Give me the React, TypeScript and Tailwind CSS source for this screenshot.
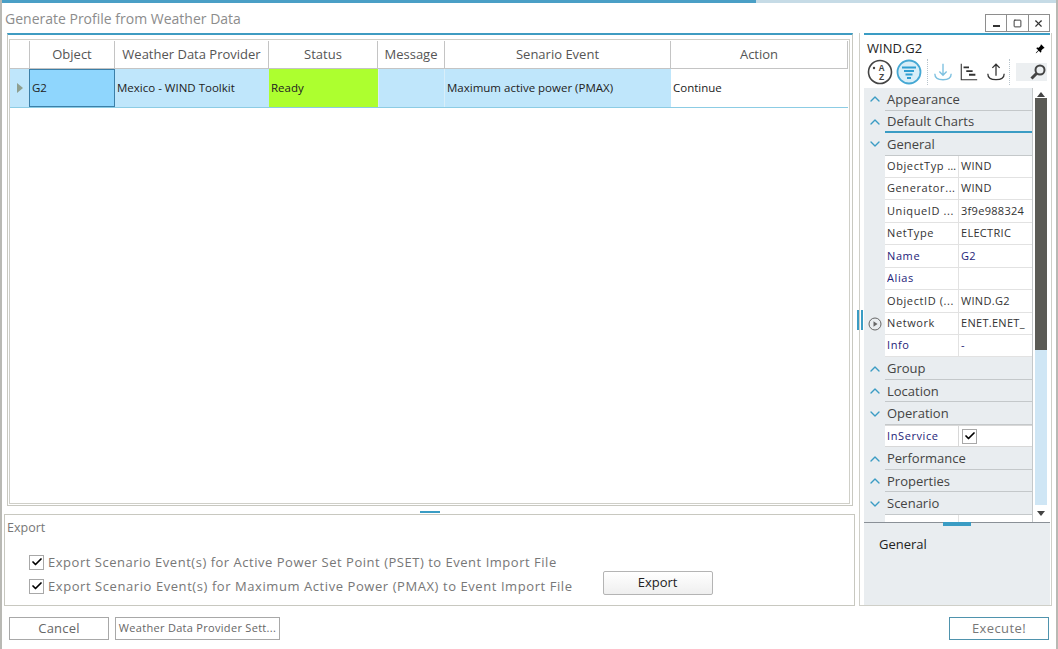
import { Check, ChevronDown, ChevronUp, Square, X } from "lucide-react";
import { BsPinAngleFill } from "react-icons/bs";
import React from "react";

const columns = [
  { label: "Object", width: "w-[85px]" },
  { label: "Weather Data Provider", width: "w-[154px]" },
  { label: "Status", width: "w-[109px]" },
  { label: "Message", width: "w-[67px]" },
  { label: "Senario Event", width: "w-[226px]" },
  { label: "Action", width: "w-[177px]" },
];

function Checkbox() {
  return (
    <span className="flex h-[15px] w-[15px] shrink-0 items-center justify-center border border-[#a8a8a8] bg-white">
      <Check className="h-3 w-3 text-black" strokeWidth={3.5} />
    </span>
  );
}

function Category({ label, open, line }: { label: string; open?: boolean; line?: boolean }) {
  return (
    <div className="flex h-[22.5px] shrink-0">
      <div className="flex w-[21px] items-center justify-center text-[#3a9cc4]">
        {open ? <ChevronDown className="h-4 w-4" strokeWidth={2} /> : <ChevronUp className="h-4 w-4" strokeWidth={2} />}
      </div>
      <div
        className={
          line
            ? "flex flex-1 items-center border-b-2 border-[#3a9cc4] pl-[2px] pt-[2px] text-[13px] text-[#444]"
            : "flex flex-1 items-center border-b border-[#c4c8ca] pl-[2px] pt-[2px] text-[13px] text-[#444]"
        }
      >
        {label}
      </div>
    </div>
  );
}

function Prop({ name, value, blue, play }: { name: string; value?: string; blue?: boolean; play?: boolean }) {
  return (
    <div className="flex h-[22.45px] shrink-0">
      <div className="flex w-[21px] items-center justify-center">
        {play && (
          <svg width="14" height="14" viewBox="0 0 14 14" fill="none">
            <circle cx="7" cy="7" r="6" stroke="#666" strokeWidth="1" />
            <path d="M5.5 4.2 9.5 7l-4 2.8z" fill="#666" />
          </svg>
        )}
      </div>
      <div
        className={
          blue
            ? "flex w-[74px] items-center border-b border-r border-[#e2e2e2] bg-white pl-[2px] text-[11px] tracking-[0.6px] text-[#1d1d78]"
            : "flex w-[74px] items-center border-b border-r border-[#e2e2e2] bg-white pl-[2px] text-[11px] tracking-[0.6px] text-[#333]"
        }
      >
        <span className="truncate">{name}</span>
      </div>
      <div
        className={
          blue
            ? "flex flex-1 items-center overflow-hidden whitespace-nowrap border-b border-[#e2e2e2] bg-white pl-[2px] text-[11px] tracking-[0.3px] text-[#1d1d78]"
            : "flex flex-1 items-center overflow-hidden whitespace-nowrap border-b border-[#e2e2e2] bg-white pl-[2px] text-[11px] tracking-[0.3px] text-[#333]"
        }
      >
        {value}
      </div>
    </div>
  );
}

function ToolIcons() {
  return (
    <div className="flex h-[33px] items-center pl-[3px]">
      <svg width="26" height="26" viewBox="0 0 26 26" fill="none">
        <circle cx="13" cy="13" r="11.5" stroke="#444" strokeWidth="1.6" />
        <text x="14.5" y="11.5" fontSize="8.5" fontWeight="700" textAnchor="middle" fill="#444" fontFamily="Liberation Sans, sans-serif">A</text>
        <text x="14.5" y="21" fontSize="8.5" fontWeight="700" textAnchor="middle" fill="#444" fontFamily="Liberation Sans, sans-serif">Z</text>
        <circle cx="7" cy="9" r="1.2" fill="#444" />
      </svg>
      <svg className="ml-[3px]" width="26" height="26" viewBox="0 0 26 26" fill="none">
        <circle cx="13" cy="13" r="11.5" fill="#d8eef8" stroke="#45a8d4" strokeWidth="1.8" />
        <path d="M6 8.5h14M8 12h10M9.5 15.5h7M11 19h4" stroke="#2f9ed0" strokeWidth="1.8" />
      </svg>
      <span className="ml-[5px] h-[26px] border-l border-dotted border-[#b8c4cc]" />
      <svg className="ml-[5px]" width="20" height="20" viewBox="0 0 22 22" fill="none">
        <path d="M11 2v12M7 10.5l4 4 4-4" stroke="#7cc0e0" strokeWidth="1.5" />
        <path d="M2 13c0 5 4 6.5 9 6.5S20 18 20 13" stroke="#7cc0e0" strokeWidth="1.5" />
      </svg>
      <svg className="ml-[6px]" width="20" height="20" viewBox="0 0 22 22" fill="none">
        <path d="M2.5 2v17.5H20" stroke="#333" strokeWidth="1.2" />
        <path d="M5 6h6M8 10h7M11 14h7" stroke="#333" strokeWidth="2" />
      </svg>
      <svg className="ml-[7px]" width="20" height="20" viewBox="0 0 22 22" fill="none">
        <path d="M11 15V3M7 6.5l4-4 4 4" stroke="#333" strokeWidth="1.4" />
        <path d="M2 13c0 5 4 6.5 9 6.5S20 18 20 13" stroke="#333" strokeWidth="1.4" />
      </svg>
      <span className="ml-[3px] h-[26px] border-l border-dotted border-[#b8c4cc]" />
      <div className="ml-[6px] flex h-[18px] w-[31px] items-center justify-end bg-[#eceff1]">
        <svg width="18" height="18" viewBox="0 0 18 18" fill="none">
          <circle cx="11" cy="7" r="4.5" stroke="#444" strokeWidth="2" />
          <path d="M7.5 10.5 2.5 15.5" stroke="#444" strokeWidth="3" />
        </svg>
      </div>
    </div>
  );
}

function PropertyPanel() {
  return (
    <div className="relative ml-[4px] flex w-[193px] flex-col border-x border-b border-[#cfcfc8] pl-[4px] pr-[1px]">
      <div className="absolute -left-[3px] top-[277px] flex h-[20px] gap-[2px]">
        <span className="w-[2px] bg-[#3a9cc4]" />
        <span className="w-[2px] bg-[#3a9cc4]" />
      </div>
      <div className="border-t-2 border-[#3a9cc4]" />
      <div className="flex h-[20px] items-center justify-between pl-[3px] pr-[5px] pt-[7px] text-[13px] text-[#222]">
        <span>WIND.G2</span>
        <BsPinAngleFill className="h-[10px] w-[10px] text-black" />
      </div>
      <ToolIcons />
      <div className="flex h-[434px] bg-white">
        <div className="flex w-[169px] flex-col overflow-hidden border-r border-[#c4c8ca] bg-[#e9edf0]">
          <Category label="Appearance" />
          <Category label="Default Charts" line />
          <Category label="General" open />
          <Prop name="ObjectTyp ..." value="WIND" />
          <Prop name="Generator..." value="WIND" />
          <Prop name="UniqueID ..." value="3f9e988324" />
          <Prop name="NetType" value="ELECTRIC" />
          <Prop name="Name" value="G2" blue />
          <Prop name="Alias" blue />
          <Prop name="ObjectID (..." value="WIND.G2" />
          <Prop name="Network" value="ENET.ENET_" play />
          <Prop name="Info" value="-" blue />
          <Category label="Group" />
          <Category label="Location" />
          <Category label="Operation" open />
          <div className="flex h-[22.5px] shrink-0">
            <div className="w-[21px]" />
            <div className="flex w-[74px] items-center border-y border-r border-[#d8d8d8] bg-white pl-[2px] text-[11px] tracking-[0.6px] text-[#1d1d78]">
              InService
            </div>
            <div className="flex flex-1 items-center border-y border-[#d8d8d8] bg-white pl-[3px]">
              <Checkbox />
            </div>
          </div>
          <Category label="Performance" />
          <Category label="Properties" />
          <Category label="Scenario" open />
          <Prop name="" />
        </div>
        <div className="ml-[2px] flex w-[12px] flex-col items-center">
          <span className="mt-[4px] h-0 w-0 border-x-[4px] border-b-[5px] border-x-transparent border-b-[#444]" />
          <div className="mt-[1px] h-[252px] w-full bg-[#5b5b56]" />
          <div className="h-[155px] w-full bg-[#cfe6f5]" />
          <span className="mt-[6px] h-0 w-0 border-x-[4px] border-t-[5px] border-x-transparent border-t-[#444]" />
        </div>
      </div>
      <div className="flex flex-1 flex-col bg-[#e9edf0]">
        <div className="flex h-[3px] items-center justify-center border-t border-[#8a9097]">
          <span className="h-[4px] w-[28px] bg-[#3a9cc4]" />
        </div>
        <div className="pl-[15px] pt-[10px] text-[13px] text-[#222]">General</div>
      </div>
    </div>
  );
}

export default function App() {
  return (
    <div className="flex h-[649px] w-[1058px] flex-col overflow-hidden border-x-2 border-x-[#b9b9b4] bg-white font-['Open_Sans',sans-serif]">
      <div className="-mx-[2px] flex h-[3px] shrink-0">
        <div className="w-[756px] bg-[#4a9fc6]" />
        <div className="flex-1 bg-[#c6dbe6]" />
      </div>
      <div className="relative flex h-[30px] shrink-0 items-center pl-[3px] text-[14px] text-[#8c8c8c]">
        Generate Profile from Weather Data
        <div className="absolute right-[6px] top-[11px] flex h-[18px] w-[65px] border border-[#8e8e8e] bg-white text-[#333]">
          <span className="flex flex-1 items-end justify-center border-r border-[#8e8e8e] pb-[4px]">
            <span className="h-[2px] w-[7px] bg-[#333]" />
          </span>
          <span className="flex flex-1 items-center justify-center border-r border-[#8e8e8e]">
            <Square className="h-[9px] w-[9px]" strokeWidth={2.5} />
          </span>
          <span className="flex flex-1 items-center justify-center">
            <X className="h-[11px] w-[11px]" strokeWidth={2.5} />
          </span>
        </div>
      </div>

      <div className="flex h-[573px] shrink-0 pl-[2px]">
        <div className="flex w-[851px] flex-col">
          <div className="ml-[3px] h-[473px] w-[846px] border-x border-b border-[#c8c8c0] border-t-2 border-t-[#3f9cc2] pb-[1px] pl-[1px] pr-[2px] pt-[4px]">
            <div className="h-full border border-[#cfcfc8]">
              <div className="flex h-[29px] w-fit border-b border-[#c4c4c4] pt-[1px] text-[13px] text-[#555]">
                <div className="w-[20px] border-r border-[#c4c4c4]" />
                {columns.map((col) => (
                  <div key={col.label} className={`${col.width} flex items-center justify-center whitespace-nowrap border-r border-[#c4c4c4]`}>
                    {col.label}
                  </div>
                ))}
              </div>
              <div className="flex h-[39px] w-fit border-b border-[#8ccce4] text-[11.5px] text-[#222]">
                <div className="flex w-[19px] items-center justify-center bg-[#bfe6fb]">
                  <span className="h-0 w-0 border-y-[5px] border-l-[6px] border-y-transparent border-l-[#8f9f8f]" />
                </div>
                <div className="flex w-[86px] items-center border border-[#3b7fa8] bg-[#8fd6fd] pl-[2px]">G2</div>
                <div className="flex w-[154px] items-center whitespace-nowrap bg-[#bfe6fb] pl-[2px]">Mexico - WIND Toolkit</div>
                <div className="flex w-[109px] items-center bg-[#adff2f] pl-[2px]">Ready</div>
                <div className="w-[67px] border-x border-[#d8eef9] bg-[#bfe6fb]" />
                <div className="flex w-[226px] items-center whitespace-nowrap bg-[#bfe6fb] pl-[2px]">Maximum active power (PMAX)</div>
                <div className="flex w-[177px] items-center bg-white pl-[2px]">Continue</div>
              </div>
            </div>
          </div>
          <div className="flex h-[8px] shrink-0 items-end justify-center pb-[1px]">
            <span className="h-[2px] w-[20px] bg-[#3a9cc4]" />
          </div>
          <div className="flex h-[92px] flex-col border border-[#c8c8c0] pl-[2px] text-[#777]">
            <div className="pt-[4px] text-[12.5px]">Export</div>
            <div className="mt-auto flex items-end pb-[9px] pl-[22px]">
              <div className="flex flex-col gap-[4px] text-[13px] leading-[20px]">
                <label className="flex items-center gap-[4px] whitespace-nowrap tracking-[0.52px]">
                  <Checkbox />
                  Export Scenario Event(s) for Active Power Set Point (PSET) to Event Import File
                </label>
                <label className="flex items-center gap-[4px] whitespace-nowrap tracking-[0.57px]">
                  <Checkbox />
                  Export Scenario Event(s) for Maximum Active Power (PMAX) to Event Import File
                </label>
              </div>
              <button className="mb-[1px] ml-[30px] h-[24px] w-[110px] rounded-[2px] border border-[#b4b4b4] bg-gradient-to-b from-white to-[#efefef] text-[13px] text-[#222]">
                Export
              </button>
            </div>
          </div>
        </div>
        <PropertyPanel />
      </div>

      <div className="flex flex-1 items-start pl-[7px] pr-[7px] pt-[11px] text-[#666]">
        <button className="h-[23px] w-[100px] border border-[#a8a8a8] text-[13px] tracking-[0.2px]">Cancel</button>
        <button className="ml-[6px] h-[23px] w-[165px] whitespace-nowrap border border-[#a8a8a8] text-[11px] tracking-[0.3px]">
          Weather Data Provider Sett...
        </button>
        <button className="ml-auto h-[23px] w-[100px] border border-[#4f93ad] text-[13px] tracking-[0.4px] text-[#777]">
          Execute!
        </button>
      </div>
    </div>
  );
}
